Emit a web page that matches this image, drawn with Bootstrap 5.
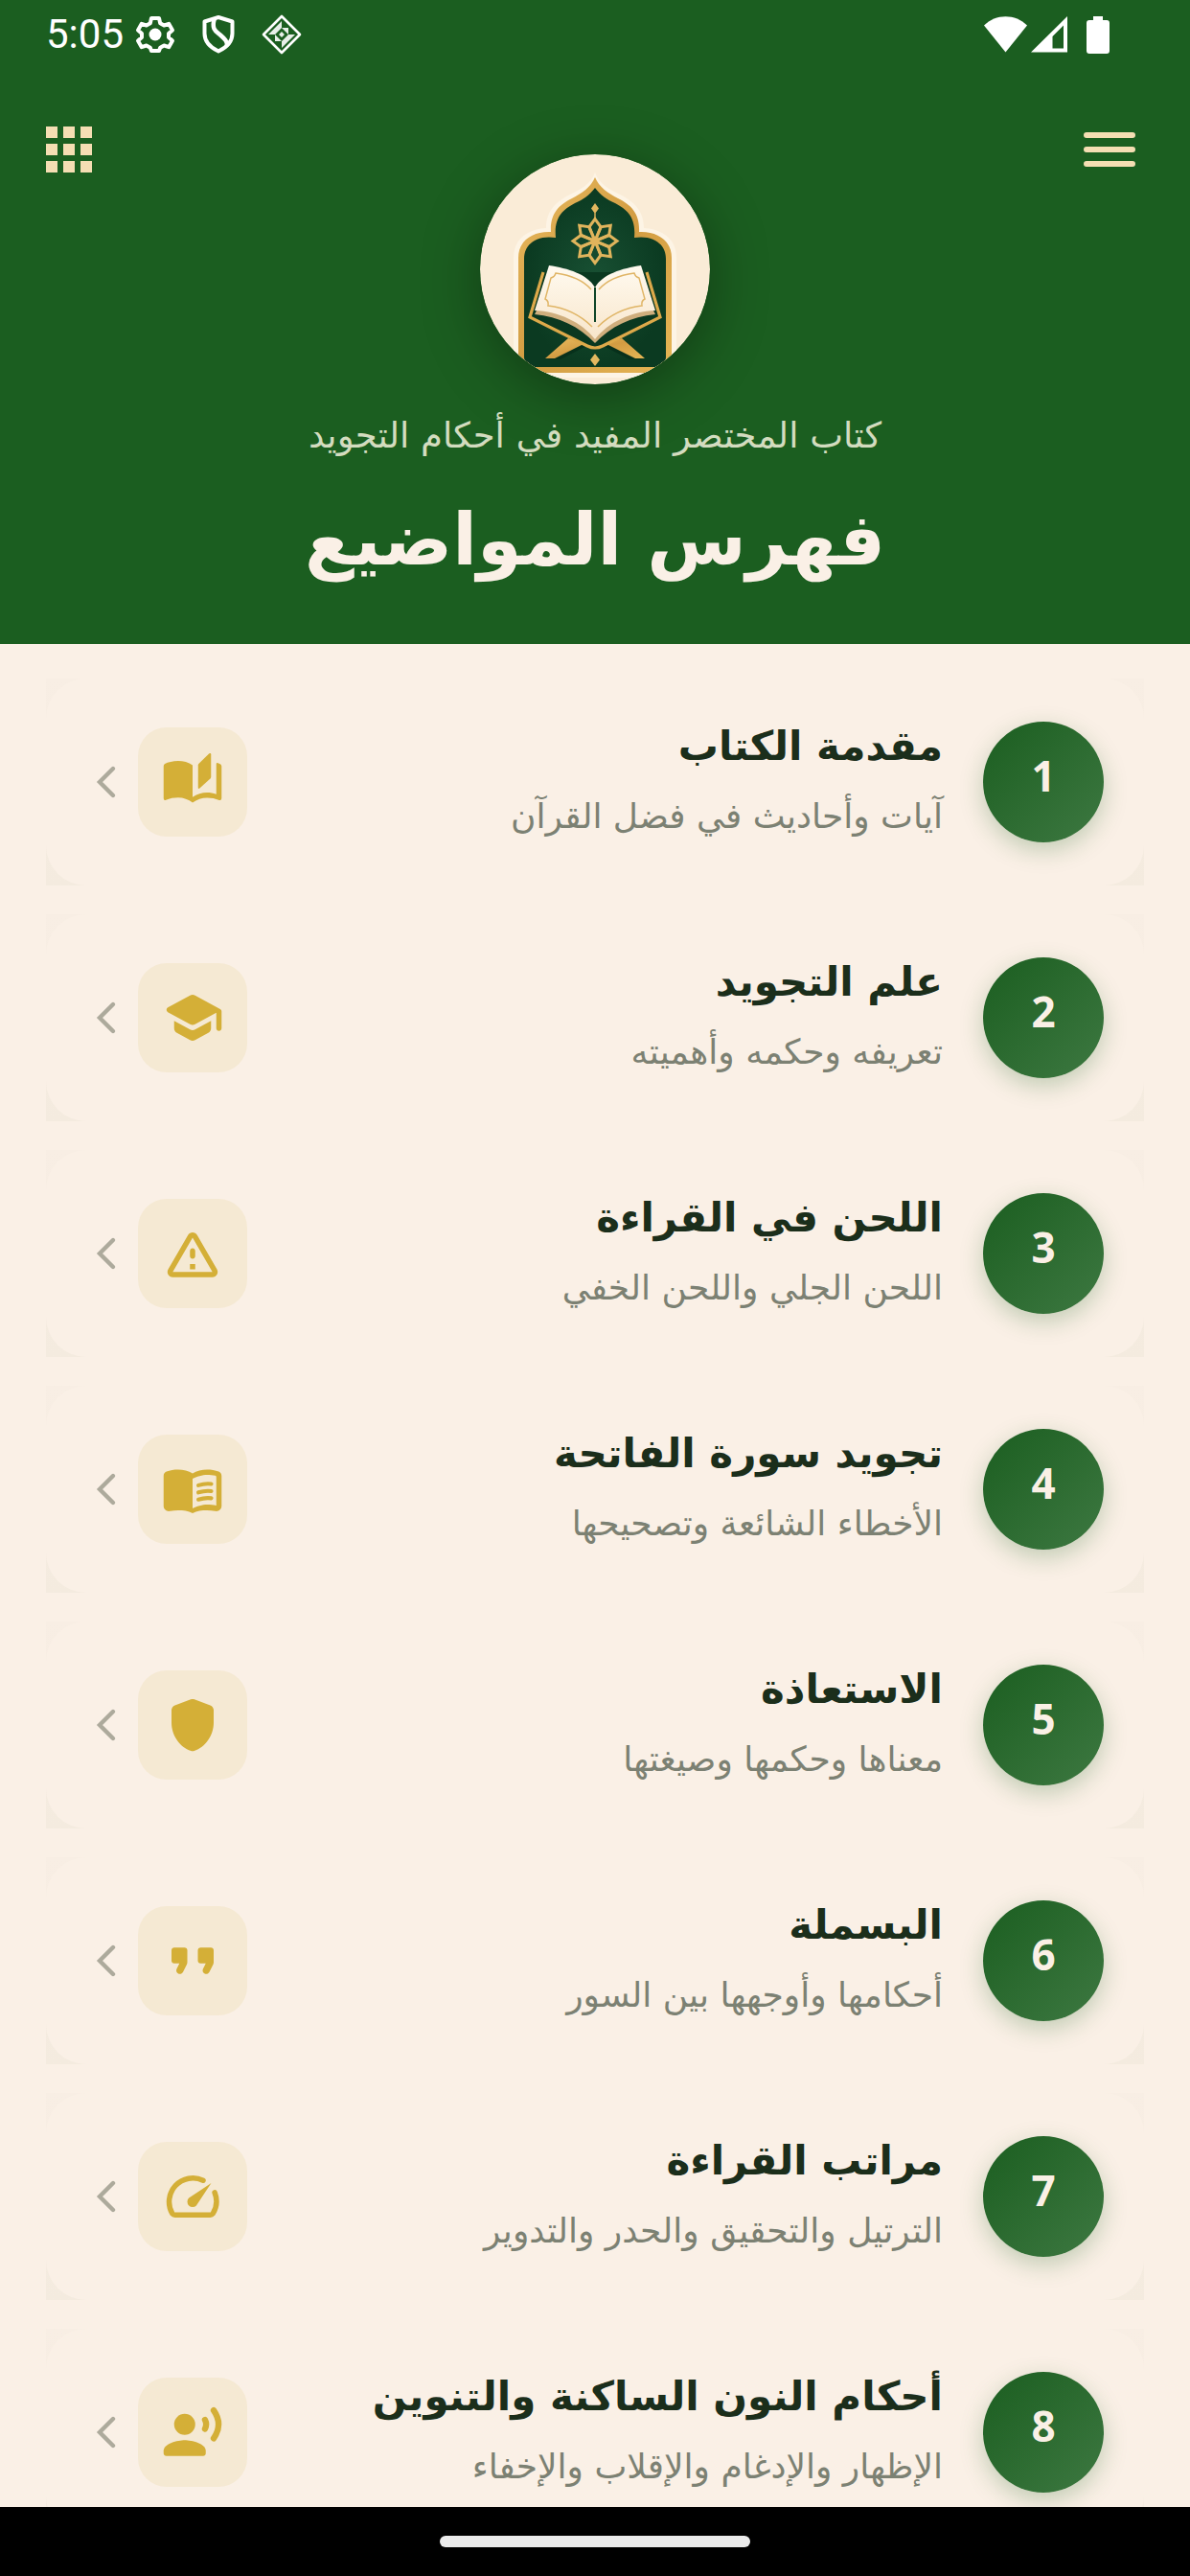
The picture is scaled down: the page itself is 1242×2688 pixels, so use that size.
<!DOCTYPE html>
<html lang="ar">
<head>
<meta charset="utf-8">
<meta name="viewport" content="width=device-width, initial-scale=1">
<title>فهرس المواضيع</title>
<link href="https://cdn.jsdelivr.net/npm/bootstrap@5.3.0/dist/css/bootstrap.min.css" rel="stylesheet">
<style>
  :root { --green:#1b5e20; --cream:#faf0e6; --wheat:#f5deb3; --gold:#d4af37; }
  body { background:var(--cream); font-family:"DejaVu Sans",sans-serif; }
  .app-head { background:var(--green); height:672px; }
  .status-bar { height:72px; padding:0 84px 0 48px; color:#fff; }
  .clock { font:400 42px/48px Roboto,sans-serif; }
  .sys-left { gap:24px; margin-left:12px; }
  .sys-right { gap:4px; }
  .head-row { display:grid; grid-template-columns:1fr auto 1fr; padding:48px 48px 0; align-items:start; }
  .icon-btn { border:0; background:none; padding:0; color:var(--wheat); display:flex; height:72px; align-items:center; }
  .logo { margin-top:41px; width:240px; height:240px; border-radius:50%; box-shadow:0 12px 60px rgba(0,0,0,.35); }
  .book-name { color:#d3dcbf; font-size:37px; line-height:60px; margin-top:24px; }
  .page-title { color:var(--cream); font-size:75px; line-height:96px; font-weight:700; margin-top:30px; }
  .topics { padding:36px 48px 0; gap:30px; scrollbar-width:none; }
  .topic { flex:none; background:linear-gradient(#f8eee4,#f4ebdf); }
  .topic-link { height:216px; padding:0 42px; border-radius:42px; background:var(--cream); text-decoration:none; }
  .num { width:126px; height:126px; border-radius:50%; flex:none; padding-bottom:14px; color:var(--cream);
         font:700 44px/60px "Noto Sans","Open Sans",sans-serif;
         background:linear-gradient(135deg,#1b5e20,#3d7841); box-shadow:0 8px 24px rgba(27,94,32,.25); }
  .topic-text { margin:0 42px; padding-bottom:4px; }
  .topic-title { color:#1b2e1b; font-size:42px; line-height:60px; font-weight:700; }
  .topic-sub { color:#7c8173; font-size:36px; line-height:54px; margin-top:16px; }
  .tile { width:114px; height:114px; border-radius:30px; background:#f5e9d3; color:var(--gold); flex:none; }
  .chev { color:#adaa9c; margin-right:12px; flex:none; }
  .home-bar { height:72px; background:#000; flex:none; }
  .pill { width:324px; height:12px; border-radius:6px; background:#ebebeb; }
</style>
</head>
<body>
<svg class="d-none" aria-hidden="true">
  <symbol id="chev" viewBox="0 0 42 42"><path d="M28 7 14 21 28 35" fill="none" stroke="currentColor" stroke-width="4.4" stroke-linecap="round" stroke-linejoin="miter"/></symbol>
</svg>
<div class="vh-100 d-flex flex-column overflow-hidden">
  <header class="app-head flex-shrink-0">
    <div class="status-bar d-flex align-items-center justify-content-between">
      <div class="d-flex align-items-center">
        <span class="clock">5:05</span>
        <div class="sys-left d-flex align-items-center">
          <svg width="42" height="42" viewBox="0 0 42 42"><path d="M17 4h8l1.200 5.200 4 2.300 5-1.700 3.800 6.600-4 3.600v4l4 3.600-3.800 6.600-5-1.700-4 2.300L25 38h-8l-1.200-3.200-4-2.300-5 1.700L3 27.600 7 24v-4l-4-3.600 3.800-6.600 5 1.700 4-2.300Z" fill="none" stroke="#fff" stroke-width="4" stroke-linejoin="round"/><circle cx="21" cy="21" r="6.500" fill="#fff"/></svg>
          <svg width="42" height="42" viewBox="0 0 42 42"><path d="M21 3 6.500 7.500V20c0 8 6 14.500 14.500 18.500C29.500 34.500 35.500 28 35.500 20V7.500Z" fill="none" stroke="#fff" stroke-width="4" stroke-linejoin="round"/><path d="M17 4c-4 12 2 14 6.500 18s6.500 6 6.500 10" fill="none" stroke="#fff" stroke-width="4.500"/></svg>
          <svg width="42" height="42" viewBox="0 0 42 42"><path d="M21 2 40 21 21 40 2 21Z" fill="none" stroke="#fff" stroke-width="2.600" stroke-linejoin="round"/><path d="M21 7v7h-7Zm-7 7v7H7Zm0 0h7l-7 7Zm7 0h7v7Zm7 7h7l-7 7Zm-14 0v7h7Zm7 7h7v-7Zm0 0v7l7-7ZM18 21l3-3 3 3-3 3Z" fill="#fff" opacity=".9"/></svg>
        </div>
      </div>
      <div class="sys-right d-flex align-items-center">
        <svg width="45" height="38" viewBox="0 0 45 38"><path d="M0 9.500C12-3 33-3 45 9.500L22.500 37.500Z" fill="#fff"/></svg>
        <svg width="38" height="38" viewBox="0 0 38 38"><path d="M38 0v37.500H0ZM34 9.500 22.500 21v12.500H34Z" fill="#fff" fill-rule="evenodd"/></svg>
        <svg class="ms-3" width="24" height="39" viewBox="0 0 24 39"><path d="M7 0h10v4h4q3 0 3 3v29q0 3-3 3H3q-3 0-3-3V7q0-3 3-3h4Z" fill="#fff"/></svg>
      </div>
    </div>
    <div class="head-row">
      <button class="icon-btn" type="button" aria-label="الأقسام"><svg width="48" height="48" viewBox="0 0 48 48" fill="currentColor"><path d="M0 0h12v12H0zM18 0h12v12H18zM36 0h12v12H36zM0 18h12v12H0zM18 18h12v12H18zM36 18h12v12H36zM0 36h12v12H0zM18 36h12v12H18zM36 36h12v12H36z"/></svg></button>
      <svg class="logo" viewBox="0 0 240 240">
        <defs>
          <clipPath id="disc"><circle cx="120" cy="120" r="120"/></clipPath>
          <linearGradient id="au" x1="0" y1="0" x2="1" y2="1"><stop offset="0" stop-color="#e9bb5f"/><stop offset=".5" stop-color="#d29c42"/><stop offset="1" stop-color="#e6b655"/></linearGradient>
          <radialGradient id="gr"><stop offset="0" stop-color="#185033"/><stop offset="1" stop-color="#0b3a21"/></radialGradient>
          <linearGradient id="pg" x1="0" y1="0" x2="0" y2="1"><stop offset="0" stop-color="#fffaf0"/><stop offset="1" stop-color="#f8e6cb"/></linearGradient>
          <path id="petal" d="M0 0-6.200-14.500 0-23 6.200-14.500Z"/>
        </defs>
        <g clip-path="url(#disc)">
          <rect width="240" height="240" fill="#faecd7"/>
          <path d="M120 19C124 31 136 37 146 42C162 50 171 60 171 77C191 78 205 89 205 108V233H35V108C35 89 49 78 69 77C69 60 78 50 94 42C104 37 116 31 120 19Z" fill="#fdf4e5"/>
          <path d="M120 24C124 34 134 41 144 46C158 53 167 62 166 81C185 80 200 90 200 108V228H40V108C40 90 55 80 74 81C73 62 82 53 96 46C106 41 116 34 120 24Z" fill="url(#au)"/>
          <path d="M120 35C126 43 132 47 141 51C154 58 163 66 161 87C180 84 194 93 194 109V212Q194 222 184 222H56Q46 222 46 212V109C46 93 60 84 79 87C77 66 86 58 99 51C108 47 114 43 120 35Z" fill="url(#gr)"/>
          <g transform="translate(120 90.500)" fill="none" stroke="#e0b45c" stroke-width="3">
            <use href="#petal"/><use href="#petal" transform="rotate(45)"/><use href="#petal" transform="rotate(90)"/><use href="#petal" transform="rotate(135)"/><use href="#petal" transform="rotate(180)"/><use href="#petal" transform="rotate(225)"/><use href="#petal" transform="rotate(270)"/><use href="#petal" transform="rotate(315)"/>
          </g>
          <path d="M120 51l4 5.500-3.300 4.500v7h-1.400v-7l-3.300-4.500ZM120 208l5 6.500-5 6.500-5-6.500Z" fill="#e3b75f"/>
          <path d="M93 193 113 199 84 214H71ZM147 193 127 199 156 214H169Z" fill="#07301b"/>
          <path d="M92 192 110 197 78 213H68ZM148 192 130 197 162 213H172Z" fill="url(#au)"/>
          <path d="M66 123 52 170 112 200Q120 204 128 200L188 170 174 123" fill="#0a3820" stroke="#dda94a" stroke-width="3.200"/>
          <path d="M57 167C82 169 104 180 120 197C136 180 158 169 183 167L180 161H60Z" fill="#cfae7d"/>
          <path d="M72 116C92 119 112 125 120 139V193C106 175 82 164 57 163Z" fill="url(#pg)"/>
          <path d="M168 116C148 119 128 125 120 139V193C134 175 158 164 183 163Z" fill="url(#pg)"/>
          <path d="M120 139v36" stroke="#0f4529" stroke-width="2"/>
          <path id="edge" d="M116 141C108 132 94 126 79 124Q78 128 74 129L68 151Q72 153 71 158C88 160 104 167 117 180" fill="none" stroke="#e0b566" stroke-width="1.500"/>
          <use href="#edge" transform="matrix(-1 0 0 1 240 0)"/>
        </g>
      </svg>
      <button class="icon-btn justify-content-end" type="button" aria-label="القائمة"><svg width="63" height="36" viewBox="0 0 63 36" stroke="currentColor" stroke-width="6" stroke-linecap="round"><path d="M3 3h48M3 18h48M3 33h48"/></svg></button>
    </div>
    <div class="text-center" dir="rtl">
      <div class="book-name">كتاب المختصر المفيد في أحكام التجويد</div>
      <h1 class="page-title mb-0">فهرس المواضيع</h1>
    </div>
  </header>

  <main class="topics flex-grow-1 d-flex flex-column overflow-auto" dir="rtl">
    <div class="topic"><a class="topic-link d-flex align-items-center" href="#t1">
      <span class="num d-flex align-items-center justify-content-center">1</span>
      <span class="topic-text flex-grow-1"><span class="topic-title d-block">مقدمة الكتاب</span><span class="topic-sub d-block">آيات وأحاديث في فضل القرآن</span></span>
      <span class="tile d-flex align-items-center justify-content-center"><svg width="66" height="66" viewBox="0 0 24 24" fill="currentColor"><path d="M12 5.600C10.500 4.500 8.500 4 6.500 4S2.600 4.500 1.500 5.100Q1 5.400 1 6V18.200Q1 19.100 1.900 18.800C3.300 18.200 4.900 17.900 6.500 17.900c2 0 4 .7 5.500 1.900 1.600-1.100 3.500-1.800 5.500-1.800 1.600 0 3.200.3 4.600.9Q23 19.100 23 18.200V6Q23 5.400 22.300 5.100L21.600 4.800Q21 4.600 21 5.200V16.600C19.900 16.200 18.700 16 17.500 16 15.500 16 13.600 16.600 12 17.700Z"/><path d="M18.300 1.200 14.400 5Q14.100 5.300 14.100 5.600V14.100q0 .7.600.3l4-3.700q.3-.3.300-.6V1.500q0-.7-.7-.3Z"/></svg></span>
      <svg class="chev" width="42" height="42"><use href="#chev"/></svg>
    </a></div>
    <div class="topic"><a class="topic-link d-flex align-items-center" href="#t2">
      <span class="num d-flex align-items-center justify-content-center">2</span>
      <span class="topic-text flex-grow-1"><span class="topic-title d-block">علم التجويد</span><span class="topic-sub d-block">تعريفه وحكمه وأهميته</span></span>
      <span class="tile d-flex align-items-center justify-content-center"><svg width="66" height="66" viewBox="0 0 24 24" fill="currentColor"><path d="M5 13.180v2.810c0 .73.4 1.410 1.040 1.760l5 2.730c.6.330 1.320.330 1.920 0l5-2.730c.64-.35 1.040-1.030 1.040-1.760v-2.810l-6.040 3.300c-.6.330-1.320.330-1.920 0L5 13.180zm6.040-9.660l-8.430 4.600c-.69.38-.69 1.380 0 1.760l8.430 4.600c.6.330 1.320.330 1.920 0L21 10.090V16c0 .55.45 1 1 1s1-.45 1-1V9.590c0-.37-.2-.7-.52-.88l-9.520-5.190c-.6-.32-1.320-.32-1.920 0z"/></svg></span>
      <svg class="chev" width="42" height="42"><use href="#chev"/></svg>
    </a></div>
    <div class="topic"><a class="topic-link d-flex align-items-center" href="#t3">
      <span class="num d-flex align-items-center justify-content-center">3</span>
      <span class="topic-text flex-grow-1"><span class="topic-title d-block">اللحن في القراءة</span><span class="topic-sub d-block">اللحن الجلي واللحن الخفي</span></span>
      <span class="tile d-flex align-items-center justify-content-center"><svg width="66" height="66" viewBox="0 0 24 24" fill="currentColor"><path fill-rule="evenodd" d="M12 5.990L19.530 19H4.470L12 5.990M2.740 18c-.77 1.330.19 3 1.730 3h15.060c1.540 0 2.500-1.670 1.730-3L13.730 4.990c-.77-1.330-2.690-1.330-3.460 0L2.740 18zM11 11v2c0 .55.45 1 1 1s1-.45 1-1v-2c0-.55-.45-1-1-1s-1 .45-1 1zm0 5h2v2h-2z"/></svg></span>
      <svg class="chev" width="42" height="42"><use href="#chev"/></svg>
    </a></div>
    <div class="topic"><a class="topic-link d-flex align-items-center" href="#t4">
      <span class="num d-flex align-items-center justify-content-center">4</span>
      <span class="topic-text flex-grow-1"><span class="topic-title d-block">تجويد سورة الفاتحة</span><span class="topic-sub d-block">الأخطاء الشائعة وتصحيحها</span></span>
      <span class="tile d-flex align-items-center justify-content-center"><svg width="66" height="66" viewBox="0 0 24 24" fill="currentColor"><path fill-rule="evenodd" d="M12 6C10.500 4.900 8.500 4.500 6.500 4.500c-1.500 0-3.100.2-4.400.8C1.400 5.600 1 6.200 1 6.900V18.400c0 1.300 1.200 2.200 2.500 1.900 1-.2 2-.3 3-.3 2 0 3.900.1 5.500 1.100C13.600 20.100 15.500 20 17.500 20c1 0 2 .1 3 .3 1.300.3 2.500-.6 2.500-1.900V6.900c0-.7-.4-1.300-1.100-1.600-1.300-.6-2.900-.8-4.400-.8-2 0-4 .4-5.500 1.500ZM21 18.200c-1.100-.3-2.300-.4-3.500-.4-1.700 0-4.100.6-5.500 1.500V8c1.400-.9 3.800-1.500 5.500-1.500 1 0 2.300.1 3.100.3q.4.1.4.5Z"/><path d="M14.200 10.500c1.600-.5 3.300-.7 4.900-.5M14.200 13.200c1.600-.5 3.300-.7 4.900-.5M14.200 15.900c1.600-.5 3.300-.7 4.900-.5" fill="none" stroke="currentColor" stroke-width="1.500" stroke-linecap="round"/></svg></span>
      <svg class="chev" width="42" height="42"><use href="#chev"/></svg>
    </a></div>
    <div class="topic"><a class="topic-link d-flex align-items-center" href="#t5">
      <span class="num d-flex align-items-center justify-content-center">5</span>
      <span class="topic-text flex-grow-1"><span class="topic-title d-block">الاستعاذة</span><span class="topic-sub d-block">معناها وحكمها وصيغتها</span></span>
      <span class="tile d-flex align-items-center justify-content-center"><svg width="66" height="66" viewBox="0 0 24 24" fill="currentColor"><path d="M11.300 2.270 5.300 4.520C4.520 4.810 4 5.550 4 6.390v4.700c0 4.830 3.130 9.370 7.430 10.750.37.120.77.120 1.140 0C16.870 20.460 20 15.920 20 11.090v-4.700c0-.84-.52-1.580-1.300-1.870l-6-2.250c-.45-.17-.95-.17-1.400 0Z"/></svg></span>
      <svg class="chev" width="42" height="42"><use href="#chev"/></svg>
    </a></div>
    <div class="topic"><a class="topic-link d-flex align-items-center" href="#t6">
      <span class="num d-flex align-items-center justify-content-center">6</span>
      <span class="topic-text flex-grow-1"><span class="topic-title d-block">البسملة</span><span class="topic-sub d-block">أحكامها وأوجهها بين السور</span></span>
      <span class="tile d-flex align-items-center justify-content-center"><svg width="66" height="66" viewBox="0 0 24 24" fill="currentColor"><path d="M7.170 17c.51 0 .98-.29 1.200-.74l1.420-2.840c.14-.28.21-.58.21-.89V8c0-.55-.45-1-1-1H5c-.55 0-1 .45-1 1v4c0 .55.45 1 1 1h2l-1.030 2.060c-.45.89.2 1.940 1.200 1.940zm10 0c.51 0 .98-.29 1.200-.74l1.420-2.840c.14-.28.21-.58.21-.89V8c0-.55-.45-1-1-1h-4c-.55 0-1 .45-1 1v4c0 .55.45 1 1 1h2l-1.030 2.060c-.45.89.2 1.940 1.200 1.940z"/></svg></span>
      <svg class="chev" width="42" height="42"><use href="#chev"/></svg>
    </a></div>
    <div class="topic"><a class="topic-link d-flex align-items-center" href="#t7">
      <span class="num d-flex align-items-center justify-content-center">7</span>
      <span class="topic-text flex-grow-1"><span class="topic-title d-block">مراتب القراءة</span><span class="topic-sub d-block">الترتيل والتحقيق والحدر والتدوير</span></span>
      <span class="tile d-flex align-items-center justify-content-center"><svg width="66" height="66" viewBox="0 0 24 24" fill="currentColor"><path d="M16 5.900A9 9 0 0 0 4.300 18.500Q4.700 19 5.300 19H18.700Q19.300 19 19.700 18.500A9 9 0 0 0 20.400 10.500" fill="none" stroke="currentColor" stroke-width="2" stroke-linecap="round"/><path d="M10.590 15.410a2 2 0 0 0 2.830 0l5.660-8.490-8.490 5.660a2 2 0 0 0 0 2.830z"/></svg></span>
      <svg class="chev" width="42" height="42"><use href="#chev"/></svg>
    </a></div>
    <div class="topic"><a class="topic-link d-flex align-items-center" href="#t8">
      <span class="num d-flex align-items-center justify-content-center">8</span>
      <span class="topic-text flex-grow-1"><span class="topic-title d-block">أحكام النون الساكنة والتنوين</span><span class="topic-sub d-block">الإظهار والإدغام والإقلاب والإخفاء</span></span>
      <span class="tile d-flex align-items-center justify-content-center"><svg width="66" height="66" viewBox="0 0 24 24" fill="currentColor"><circle cx="9" cy="9" r="4"/><path d="M9 15c-2.670 0-8 1.340-8 4v1c0 .55.45 1 1 1h14c.55 0 1-.45 1-1v-1c0-2.660-5.330-4-8-4z"/><path d="M16.700 7.300q.9 1.700 0 3.400M20 3.700q3.700 5.300 0 10.600" fill="none" stroke="currentColor" stroke-width="2.300" stroke-linecap="round"/></svg></span>
      <svg class="chev" width="42" height="42"><use href="#chev"/></svg>
    </a></div>
  </main>
  <div class="home-bar d-flex align-items-center justify-content-center"><div class="pill"></div></div>
</div>
<script src="https://cdn.jsdelivr.net/npm/bootstrap@5.3.0/dist/js/bootstrap.bundle.min.js"></script>
</body>
</html>
